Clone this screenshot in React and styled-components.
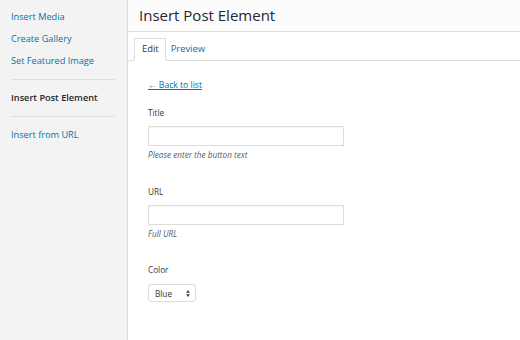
import styled, { createGlobalStyle } from 'styled-components';

const GlobalStyle = createGlobalStyle`
  html, body {
    margin: 0;
    padding: 0;
    background: #fff;
  }
  body {
    font-family: 'Open Sans', 'Liberation Sans', sans-serif;
    color: #32373c;
  }
`;

const Frame = styled.div`
  display: flex;
  width: 520px;
  height: 340px;
  overflow: hidden;
`;

const Sidebar = styled.nav`
  width: 128px;
  flex-shrink: 0;
  background: #f3f3f3;
  border-right: 1px solid #dddddd;
  padding: 9px 12px 0 11px;
  box-sizing: border-box;
`;

const MenuGroup = styled.div`
  display: flex;
  flex-direction: column;
  gap: 6px;
  padding: ${(p) => (p.$first ? '0' : '10px 0')};
`;

const MenuItem = styled.a`
  display: block;
  font-size: 9.2px;
  line-height: 16px;
  color: ${(p) => (p.$active ? '#23282d' : '#0073aa')};
  font-weight: ${(p) => (p.$active ? 600 : 400)};
  text-decoration: none;
`;

const Separator = styled.hr`
  border: 0;
  border-top: 1px solid #dddddd;
  margin: ${(p) => (p.$flush ? 0 : '10px 0 0')};
`;

const Main = styled.main`
  flex: 1;
  display: flex;
  flex-direction: column;
`;

const Header = styled.header`
  height: 32px;
  background: #fcfcfc;
  border-bottom: 1px solid #dddddd;
  display: flex;
  align-items: center;
  padding-left: 11px;
  box-sizing: border-box;
`;

const Heading = styled.h1`
  margin: 0 0 1px;
  font-size: 15px;
  font-weight: 400;
  color: #23282d;
`;

const Tabs = styled.div`
  display: flex;
  align-items: flex-end;
  height: 29px;
  padding-left: 6px;
  border-bottom: 1px solid #dddddd;
  box-sizing: border-box;
`;

const Tab = styled.a`
  font-size: 9.4px;
  line-height: 20px;
  height: 23px;
  padding: 0 6px 0 ${(p) => (p.$active ? 7 : 4)}px;
  margin-bottom: -1px;
  box-sizing: border-box;
  text-decoration: none;
  color: ${(p) => (p.$active ? '#32373c' : '#0073aa')};
  background: ${(p) => (p.$active ? '#fff' : 'transparent')};
  border: 1px solid ${(p) => (p.$active ? '#dddddd' : 'transparent')};
  border-bottom-color: ${(p) => (p.$active ? '#fff' : 'transparent')};
`;

const Panel = styled.section`
  padding: 17px 20px 0;
  display: flex;
  flex-direction: column;
  align-items: flex-start;
`;

const BackLink = styled.a`
  font-size: 8.6px;
  color: #0073aa;
  text-decoration: underline;
  line-height: 14px;
  margin-bottom: 14px;
`;

const Field = styled.div`
  display: flex;
  flex-direction: column;
  align-items: flex-start;
  margin-bottom: ${(p) => p.$gap || 0}px;
`;

const Label = styled.label`
  font-size: 8.2px;
  line-height: 14px;
  color: #32373c;
  margin-bottom: ${(p) => p.$space || 6}px;
`;

const TextInput = styled.input`
  width: 196px;
  height: 20px;
  box-sizing: border-box;
  border: 1px solid #dddddd;
  box-shadow: inset 0 1px 2px rgba(0, 0, 0, 0.05);
  background: #fff;
  margin: 0;
  padding: 2px 5px;
  font-family: inherit;
`;

const Help = styled.p`
  margin: 2px 0 0;
  font-size: 8.2px;
  font-style: italic;
  line-height: 14px;
  color: #555d66;
`;

const SelectBox = styled.div`
  width: 48px;
  height: 18px;
  box-sizing: border-box;
  border: 1px solid #dddddd;
  border-radius: 3px;
  background: #fff;
  display: flex;
  align-items: center;
  justify-content: space-between;
  padding: 0 5px 0 6px;
  font-size: 8.2px;
  color: #32373c;
`;

const Arrows = styled.svg`
  width: 4px;
  height: 7px;
  fill: #444;
`;

const sideLinks = ['Insert Media', 'Create Gallery', 'Set Featured Image'];

export default function App() {
  return (
    <>
      <GlobalStyle />
      <Frame>
        <Sidebar>
          <MenuGroup $first>
            {sideLinks.map((l) => (
              <MenuItem key={l} href="#">
                {l}
              </MenuItem>
            ))}
          </MenuGroup>
          <Separator />
          <MenuGroup>
            <MenuItem $active>Insert Post Element</MenuItem>
          </MenuGroup>
          <Separator $flush />
          <MenuGroup>
            <MenuItem href="#">Insert from URL</MenuItem>
          </MenuGroup>
        </Sidebar>
        <Main>
          <Header>
            <Heading>Insert Post Element</Heading>
          </Header>
          <Tabs>
            <Tab $active>Edit</Tab>
            <Tab href="#">Preview</Tab>
          </Tabs>
          <Panel>
            <BackLink href="#">← Back to list</BackLink>
            <Field $gap={23}>
              <Label>Title</Label>
              <TextInput />
              <Help>Please enter the button text</Help>
            </Field>
            <Field $gap={22}>
              <Label>URL</Label>
              <TextInput />
              <Help>Full URL</Help>
            </Field>
            <Field>
              <Label $space={7}>Color</Label>
              <SelectBox>
                Blue
                <Arrows viewBox="0 0 4 7">
                  <path d="M2 0 L4 2.8 H0 Z M0 4.2 H4 L2 7 Z" />
                </Arrows>
              </SelectBox>
            </Field>
          </Panel>
        </Main>
      </Frame>
    </>
  );
}
